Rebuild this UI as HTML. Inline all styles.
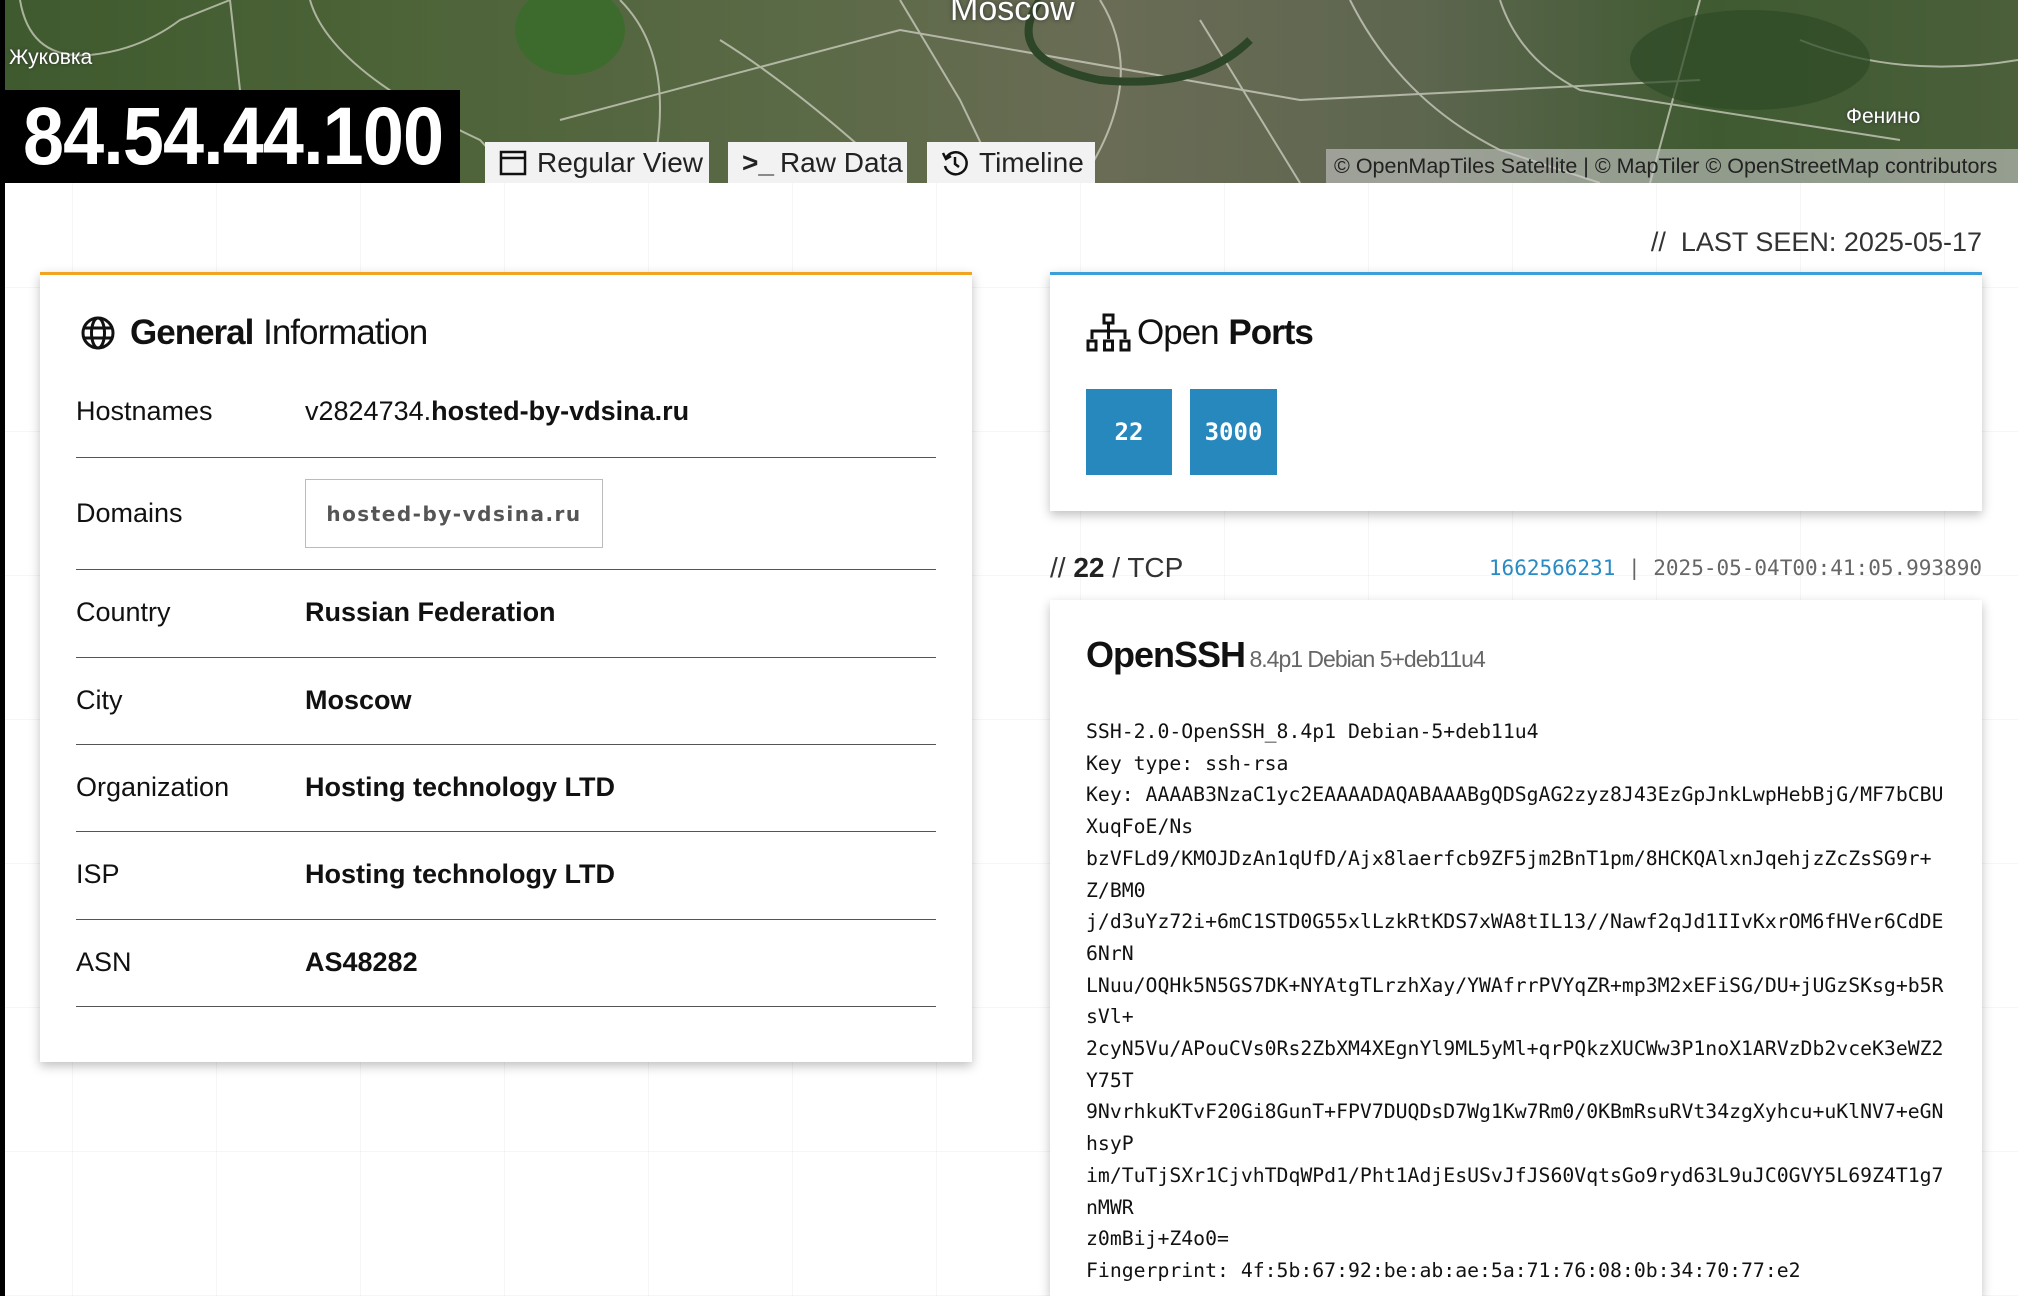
<!DOCTYPE html>
<html style="overflow:hidden;width:2018px;height:1296px"><head><meta charset="utf-8"><style>
*{margin:0;padding:0;box-sizing:border-box}
body{width:2018px;height:1296px;overflow:hidden;position:relative;font-family:"Liberation Sans","DejaVu Sans",sans-serif;color:#111;
background-color:#fff;
background-image:linear-gradient(90deg,rgba(0,0,0,0.035) 1px,transparent 1px),linear-gradient(0deg,rgba(0,0,0,0.035) 1px,transparent 1px);
background-size:144px 144px;background-position:72px 0,0 0}
.abs{position:absolute}
#map{left:0;top:0;width:2018px;height:183px;overflow:hidden;background:linear-gradient(90deg,#3e5a2e 0%,#4d6338 20%,#5b6a47 40%,#6a6c55 55%,#5e6650 70%,#3f5a31 85%,#4a5f3a 100%)}
.btn{top:142px;height:41px;background:#f2f2f2;font-size:28px;color:#222;display:flex;align-items:center;padding-left:14px}
.card{background:#fff;box-shadow:0 4px 10px rgba(0,0,0,0.25)}
.row{position:absolute;left:36px;width:860px;border-bottom:1.5px solid #555;font-size:27px}
.lbl{position:absolute;left:0}
.val{position:absolute;left:229px;font-weight:bold}
pre{font-family:"DejaVu Sans Mono","Liberation Mono",monospace;font-size:19.8px;line-height:31.7px;color:#111}
</style></head><body>
<div id="map" class="abs">
<svg width="2018" height="183" class="abs" style="left:0;top:0">
<g stroke="#d8d8cc" stroke-width="2" fill="none" opacity="0.7">
<path d="M20 0 Q30 60 90 55 Q140 50 180 20 L230 0"/>
<path d="M230 0 L240 90 L260 183"/>
<path d="M310 0 Q330 70 480 140 L520 183"/>
<path d="M620 0 Q680 60 650 183"/>
<path d="M720 40 Q800 90 900 183"/>
<path d="M900 0 L960 100 L1000 183"/>
<path d="M1100 0 Q1150 80 1080 183"/>
<path d="M1200 20 L1300 183"/>
<path d="M1350 0 Q1400 100 1500 150 L1600 183"/>
<path d="M1700 0 L1650 183"/>
<path d="M1800 40 Q1900 80 2018 60"/>
<path d="M560 120 L900 30 L1300 100 L1700 80"/>
<path d="M1500 0 Q1520 60 1580 90 L1900 140"/>
</g>
<path d="M1040 0 Q1000 60 1100 80 Q1200 90 1250 40" stroke="#2e4628" stroke-width="8" fill="none"/>
<ellipse cx="570" cy="30" rx="55" ry="45" fill="#3d6b2d"/>
<ellipse cx="1750" cy="60" rx="120" ry="50" fill="#2e4a26" opacity="0.7"/>
</svg>
<div class="abs" style="left:9px;top:46px;font-size:21px;color:#fff;text-shadow:0 0 3px #333">Жуковка</div>
<div class="abs" style="left:950px;top:-10px;font-size:34px;color:#fff;text-shadow:0 0 4px #333">Moscow</div>
<div class="abs" style="left:1846px;top:105px;font-size:21px;color:#fff;text-shadow:0 0 3px #333">Фенино</div>
<div class="abs" style="left:1326px;top:149px;width:692px;height:34px;background:rgba(200,200,200,0.6);font-size:21.5px;color:#222;padding:5px 0 0 8px;white-space:nowrap">© OpenMapTiles Satellite | © MapTiler © OpenStreetMap contributors</div>
</div>
<div class="abs" style="left:0;top:0;width:5px;height:1296px;background:#000"></div>
<div class="abs" style="left:5px;top:90px;width:455px;height:93px;background:#000;color:#fff;font-weight:bold;font-size:82px;line-height:93px;padding-left:18px;white-space:nowrap"><span style="display:inline-block;transform:scaleX(0.9);transform-origin:left;letter-spacing:-1px">84.54.44.100</span></div>
<div class="abs btn" style="left:485px;width:224px"><svg width="28" height="26" viewBox="0 0 28 26" style="margin-right:10px"><rect x="2" y="2" width="24" height="22" fill="none" stroke="#111" stroke-width="2.5"/><line x1="2" y1="8" x2="26" y2="8" stroke="#111" stroke-width="2.5"/></svg>Regular View</div>
<div class="abs btn" style="left:728px;width:179px"><span style="font-weight:bold;margin-right:6px">&gt;_</span>Raw Data</div>
<div class="abs btn" style="left:927px;width:168px"><svg width="28" height="28" viewBox="0 0 28 28" style="margin-right:10px"><path d="M5 9 A11 11 0 1 1 4 17" fill="none" stroke="#111" stroke-width="2.5"/><path d="M2 4 L5 10 L10 7" fill="none" stroke="#111" stroke-width="2.5"/><path d="M14 8 V15 L18 18" fill="none" stroke="#111" stroke-width="2.5"/></svg>Timeline</div>

<div class="abs" style="right:36px;top:227px;font-size:27px;color:#333">// &nbsp;LAST SEEN: 2025-05-17</div>

<div class="abs card" style="left:40px;top:272px;width:932px;height:790px;border-top:3px solid #f0a422">
<div class="abs" style="left:40px;top:38px;display:flex;align-items:center;font-size:35px;white-space:nowrap">
<svg width="36" height="36" viewBox="0 0 36 36" style="margin-right:14px"><g fill="none" stroke="#111" stroke-width="3"><circle cx="18" cy="18" r="15"/><ellipse cx="18" cy="18" rx="6.5" ry="15"/><line x1="3" y1="13" x2="33" y2="13"/><line x1="3" y1="23" x2="33" y2="23"/></g></svg>
<b style="letter-spacing:-1px">General</b>&nbsp;<span style="letter-spacing:-1px">Information</span></div>
<div class="row" style="top:100px;height:83px"><span class="lbl" style="top:21px">Hostnames</span><span class="val" style="top:21px;font-weight:normal">v2824734.<b>hosted-by-vdsina.ru</b></span></div>
<div class="row" style="top:183px;height:112px"><span class="lbl" style="top:40px">Domains</span><div class="abs" style="left:229px;top:21px;width:298px;height:69px;border:1.5px solid #bbb;font-family:'DejaVu Sans','Liberation Sans',sans-serif;font-weight:bold;font-size:20px;color:#555;letter-spacing:1.5px;display:flex;align-items:center;justify-content:center">hosted-by-vdsina.ru</div></div>
<div class="row" style="top:295px;height:88px"><span class="lbl" style="top:27px">Country</span><span class="val" style="top:27px">Russian Federation</span></div>
<div class="row" style="top:383px;height:87px"><span class="lbl" style="top:27px">City</span><span class="val" style="top:27px">Moscow</span></div>
<div class="row" style="top:470px;height:87px"><span class="lbl" style="top:27px">Organization</span><span class="val" style="top:27px">Hosting technology LTD</span></div>
<div class="row" style="top:557px;height:88px"><span class="lbl" style="top:27px">ISP</span><span class="val" style="top:27px">Hosting technology LTD</span></div>
<div class="row" style="top:645px;height:87px"><span class="lbl" style="top:27px">ASN</span><span class="val" style="top:27px">AS48282</span></div>
</div>

<div class="abs card" style="left:1050px;top:272px;width:932px;height:239px;border-top:3px solid #3d9fd9">
<div class="abs" style="left:36px;top:38px;display:flex;align-items:center;font-size:35px;white-space:nowrap">
<svg width="45" height="40" viewBox="0 0 45 40" style="margin-right:6px"><g fill="none" stroke="#111" stroke-width="3"><rect x="18" y="2" width="9" height="8"/><path d="M22.5 10 V18 M6 26 V18 H39 V26 M22.5 18 V26"/><rect x="2" y="28" width="8" height="9"/><rect x="18.5" y="28" width="8" height="9"/><rect x="35" y="28" width="8" height="9"/></g></svg>
<span style="letter-spacing:-1px">Open</span>&nbsp;<b style="letter-spacing:-1px">Ports</b></div>
<div class="abs" style="left:36px;top:114px;width:86px;height:86px;background:#2788be;color:#fff;font-family:'DejaVu Sans Mono',monospace;font-weight:bold;font-size:24px;display:flex;align-items:center;justify-content:center">22</div>
<div class="abs" style="left:140px;top:114px;width:87px;height:86px;background:#2788be;color:#fff;font-family:'DejaVu Sans Mono',monospace;font-weight:bold;font-size:24px;display:flex;align-items:center;justify-content:center">3000</div>
</div>

<div class="abs" style="left:1050px;top:552px;font-size:28px;color:#333">// <b style="color:#222">22</b> / TCP</div>
<div class="abs" style="right:36px;top:556px;font-family:'DejaVu Sans Mono',monospace;font-size:21px;color:#666"><span style="color:#2a8ac4">1662566231</span> | 2025-05-04T00:41:05.993890</div>

<div class="abs card" style="left:1050px;top:600px;width:932px;height:696px">
<div class="abs" style="left:36px;top:34px;white-space:nowrap"><b style="font-size:36px;letter-spacing:-1px">OpenSSH</b> <span style="font-size:23px;color:#666;letter-spacing:-1px">8.4p1 Debian 5+deb11u4</span></div>
<pre class="abs" style="left:36px;top:116px">SSH-2.0-OpenSSH_8.4p1 Debian-5+deb11u4
Key type: ssh-rsa
Key: AAAAB3NzaC1yc2EAAAADAQABAAABgQDSgAG2zyz8J43EzGpJnkLwpHebBjG/MF7bCBU
XuqFoE/Ns
bzVFLd9/KMOJDzAn1qUfD/Ajx8laerfcb9ZF5jm2BnT1pm/8HCKQAlxnJqehjzZcZsSG9r+
Z/BM0
j/d3uYz72i+6mC1STD0G55xlLzkRtKDS7xWA8tIL13//Nawf2qJd1IIvKxrOM6fHVer6CdDE
6NrN
LNuu/OQHk5N5GS7DK+NYAtgTLrzhXay/YWAfrrPVYqZR+mp3M2xEFiSG/DU+jUGzSKsg+b5R
sVl+
2cyN5Vu/APouCVs0Rs2ZbXM4XEgnYl9ML5yMl+qrPQkzXUCWw3P1noX1ARVzDb2vceK3eWZ2
Y75T
9NvrhkuKTvF20Gi8GunT+FPV7DUQDsD7Wg1Kw7Rm0/0KBmRsuRVt34zgXyhcu+uKlNV7+eGN
hsyP
im/TuTjSXr1CjvhTDqWPd1/Pht1AdjEsUSvJfJS60VqtsGo9ryd63L9uJC0GVY5L69Z4T1g7
nMWR
z0mBij+Z4o0=
Fingerprint: 4f:5b:67:92:be:ab:ae:5a:71:76:08:0b:34:70:77:e2</pre>
</div>
</body></html>
